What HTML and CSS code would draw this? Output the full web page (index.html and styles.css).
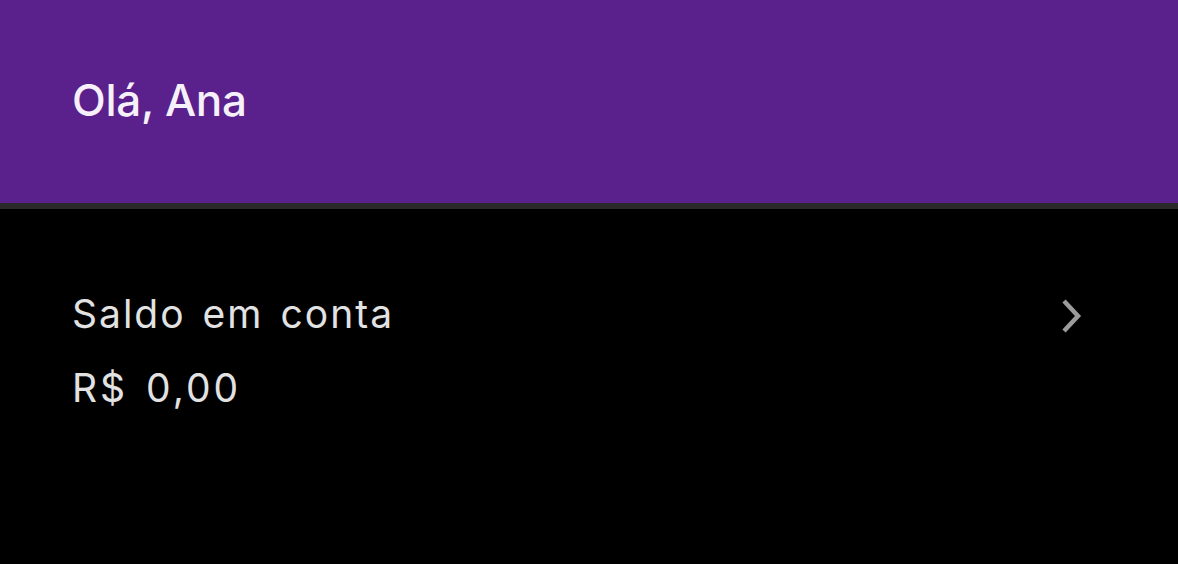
FILE: index.html
```html
<!DOCTYPE html>
<html lang="pt-BR">
<head>
<meta charset="utf-8">
<link rel="stylesheet" href="styles.css">
</head>
<body>
<header class="header">
  <h1 class="greeting">Olá, Ana</h1>
</header>
<div class="divider"></div>
<section class="balance">
  <div class="balance-text">
    <div class="balance-label">Saldo em conta</div>
    <div class="balance-value">R$ 0,00</div>
  </div>
  <svg class="chevron" width="24" height="36" viewBox="0 0 24 36" aria-hidden="true">
    <path d="M4 3 L18 18 L4 33" fill="none" stroke="#9b9b9b" stroke-width="4.5" stroke-linecap="butt" stroke-linejoin="miter"/>
  </svg>
</section>
</body>
</html>
```
FILE: styles.css
```css
html, body {
  margin: 0;
  padding: 0;
  background: #000;
  height: 100%;
}
body {
  font-family: Inter, "Noto Sans", sans-serif;
}
.header {
  background: #5a208c;
  height: 203px;
  box-sizing: border-box;
  padding: 72px 72px 0;
}
.greeting {
  margin: 0;
  font-size: 44px;
  font-weight: 500;
  color: #f6f0fa;
  line-height: 56px;
  letter-spacing: -0.3px;
}
.divider {
  height: 6px;
  background: #2a2a2a;
}
.balance {
  display: flex;
  justify-content: space-between;
  align-items: flex-start;
  padding: 83px 94px 0 72px;
}
.balance-label,
.balance-value {
  font-size: 39px;
  font-weight: 400;
  color: #e2e2e2;
  line-height: 44px;
  letter-spacing: 2px;
  word-spacing: 4px;
}
.balance-value {
  margin-top: 30px;
  letter-spacing: 3px;
}
.chevron {
  margin-top: 6px;
}
```
